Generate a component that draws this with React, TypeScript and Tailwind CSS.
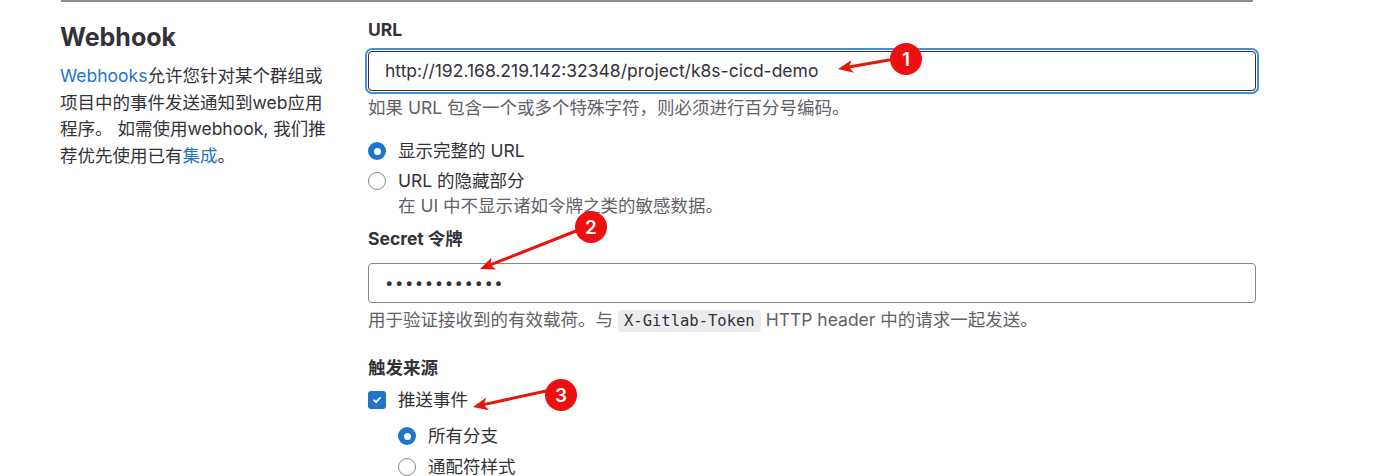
import React from "react";

const font = { fontFamily: 'Inter, "Noto Sans CJK SC", sans-serif' };

function Radio({ checked = false }: { checked?: boolean }) {
  if (checked) {
    return (
      <span className="flex h-[18px] w-[18px] shrink-0 items-center justify-center rounded-full bg-[#1f75cb]">
        <span className="h-[7px] w-[7px] rounded-full bg-white" />
      </span>
    );
  }
  return <span className="h-[18px] w-[18px] shrink-0 rounded-full border border-[#89888d] bg-white" />;
}

function Checkbox() {
  return (
    <span className="flex h-[18px] w-[18px] shrink-0 items-center justify-center rounded-[3px] bg-[#1f75cb]">
      <svg width="10" height="10" viewBox="0 0 10 10" fill="none">
        <path d="M2 5.2 4.1 7.2 8 2.8" stroke="white" strokeWidth="1.8" strokeLinecap="round" strokeLinejoin="round" />
      </svg>
    </span>
  );
}

function Arrow({ x1, y1, x2, y2 }: { x1: number; y1: number; x2: number; y2: number }) {
  const len = Math.hypot(x2 - x1, y2 - y1);
  const dx = (x2 - x1) / len;
  const dy = (y2 - y1) / len;
  const nx = -dy;
  const ny = dx;
  const head = 15;
  const half = 6.5;
  const bx = x2 - dx * head;
  const by = y2 - dy * head;
  const pts = [
    [x2, y2],
    [bx + nx * half, by + ny * half],
    [bx + dx * 4, by + dy * 4],
    [bx - nx * half, by - ny * half]
  ]
    .map((p) => p.join(","))
    .join(" ");
  return (
    <g>
      <line x1={x1} y1={y1} x2={bx + dx * 4} y2={by + dy * 4} stroke="#e8150d" strokeWidth="3" strokeLinecap="round" />
      <polygon points={pts} fill="#e8150d" />
    </g>
  );
}

function Marker({ cx, cy, n }: { cx: number; cy: number; n: string }) {
  return (
    <g>
      <circle cx={cx} cy={cy} r="16" fill="#ee0f0f" />
      <text
        x={cx}
        y={cy + 6.5}
        textAnchor="middle"
        fill="white"
        fontSize="19"
        fontWeight="600"
        fontFamily="Inter, sans-serif"
      >
        {n}
      </text>
    </g>
  );
}

export default function App() {
  return (
    <div className="relative h-[476px] w-[1395px] overflow-hidden bg-white text-[#333238]" style={font}>
      <div className="ml-[61px] h-[2px] w-[1192px] bg-[#8d8d8f]" />

      <div className="flex pl-[60px]">
        <div className="w-[270px] shrink-0">
          <h2 className="mt-[19px] text-[25px] font-bold leading-[32px]">Webhook</h2>
          <p className="mt-[10px] text-[17.5px] leading-[26.5px]">
            <span className="text-[#1f75cb]">Webhooks</span>允许您针对某个群组或项目中的事件发送通知到web应用程序。 如需使用webhook, 我们推荐优先使用已有
            <span className="text-[#1f75cb]">集成</span>。
          </p>
        </div>

        <div className="ml-[38px] w-[888px] text-[17.5px] leading-6">
          <div className="mt-[16px] font-bold">URL</div>
          <div className="mt-[9px] flex h-[40px] items-center rounded-[4px] border border-[#333238] px-4 shadow-[0_0_0_1px_#fff,0_0_0_3px_#428fdc]">
            http://192.168.219.142:32348/project/k8s-cicd-demo
          </div>
          <div className="mt-[5px] text-[#626168]">如果 URL 包含一个或多个特殊字符，则必须进行百分号编码。</div>

          <div className="mt-[19px] flex items-center gap-3">
            <Radio checked />
            <span>显示完整的 URL</span>
          </div>
          <div className="mt-[6px] flex items-center gap-3">
            <Radio />
            <span>URL 的隐藏部分</span>
          </div>
          <div className="mt-px pl-[30px] text-[#626168]">在 UI 中不显示诸如令牌之类的敏感数据。</div>

          <div className="mt-[9px] font-bold">Secret 令牌</div>
          <div className="mt-[12px] flex h-[40px] items-center rounded-[4px] border border-[#89888d] px-4 text-[15px] tracking-[1.5px]">
            ••••••••••••
          </div>
          <div className="mt-[5px] text-[#626168]">
            用于验证接收到的有效载荷。与
            <code
              className="mx-[5px] rounded-[4px] bg-[#ececef] px-[6px] py-[2px] text-[15.5px] text-[#333238]"
              style={{ fontFamily: '"DejaVu Sans Mono", monospace' }}
            >
              X-Gitlab-Token
            </code>
            HTTP header 中的请求一起发送。
          </div>

          <div className="mt-[23px] font-bold">触发来源</div>
          <div className="mt-[8px] flex items-center gap-3">
            <Checkbox />
            <span>推送事件</span>
          </div>
          <div className="mt-[12px] flex items-center gap-3 pl-[30px]">
            <Radio checked />
            <span>所有分支</span>
          </div>
          <div className="mt-[7px] flex items-center gap-3 pl-[30px]">
            <Radio />
            <span>通配符样式</span>
          </div>
        </div>
      </div>

      <svg className="pointer-events-none absolute inset-0" width="1395" height="476">
        <Arrow x1={889} y1={60} x2={838} y2={69} />
        <Marker cx={906} cy={59} n="1" />
        <Arrow x1={576} y1={231} x2={480} y2={269} />
        <Marker cx={591} cy={227} n="2" />
        <Arrow x1={546} y1={391} x2={473} y2={407} />
        <Marker cx={561} cy={395} n="3" />
      </svg>
    </div>
  );
}
